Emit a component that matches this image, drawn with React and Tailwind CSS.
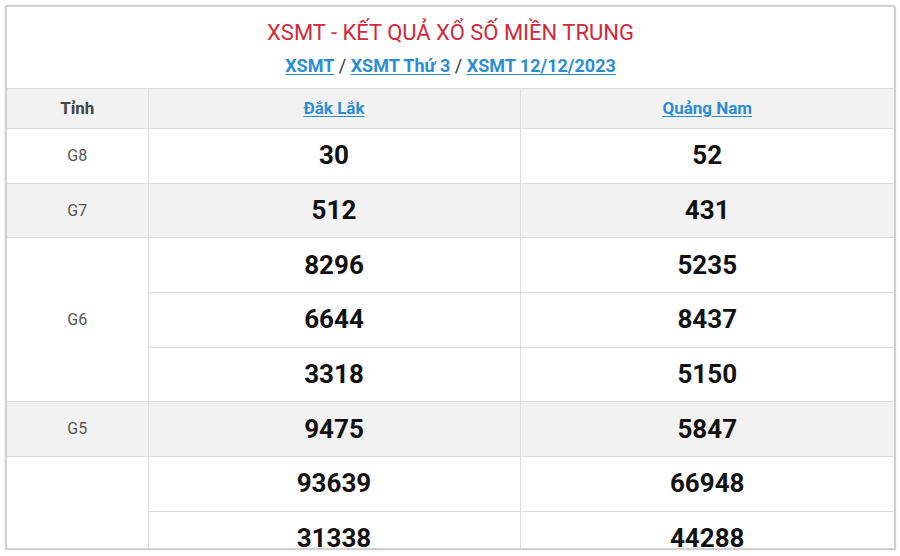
import React from 'react';

const ROWS = [
  { label: 'G8', nums: [['30', '52']], gray: false },
  { label: 'G7', nums: [['512', '431']], gray: true },
  { label: 'G6', nums: [['8296', '5235'], ['6644', '8437'], ['3318', '5150']], gray: false },
  { label: 'G5', nums: [['9475', '5847']], gray: true },
  { label: 'G4', nums: [['93639', '66948'], ['31338', '44288']], gray: false, hideLabel: true },
];

const App = () => {
  return (
    <div className="w-[900px] h-[556px] bg-white overflow-hidden" style={{ fontFamily: 'Roboto, "Liberation Sans", sans-serif' }}>
      <div className="ml-[5px] mt-[5px] w-[891px] h-[545px] border-2 border-[#d0d0d0] rounded-tr-[4px] rounded-tl-[2px] overflow-hidden shadow-[0_0_2px_rgba(0,0,0,0.15)]">
        <div className="text-center pt-[13px] h-[81px]">
          <h1 className="text-[22px] leading-[26px] text-[#d3283a]">XSMT - KẾT QUẢ XỔ SỐ MIỀN TRUNG</h1>
          <div className="mt-[9px] text-[18px] leading-[21px] font-bold text-[#333]">
            <a className="text-[#2b8ed3] underline underline-offset-2" href="#">XSMT</a>
            <span className="font-normal"> / </span>
            <a className="text-[#2b8ed3] underline underline-offset-2" href="#">XSMT Thứ 3</a>
            <span className="font-normal"> / </span>
            <a className="text-[#2b8ed3] underline underline-offset-2" href="#">XSMT 12/12/2023</a>
          </div>
        </div>
        <table className="w-full border-collapse table-fixed">
          <colgroup>
            <col className="w-[141px]" />
            <col className="w-[372px]" />
            <col />
          </colgroup>
          <thead>
            <tr className="h-[40px] bg-[#f2f2f2]">
              <th className="border-t border-[#dcdcdc] text-[17px] font-bold text-[#444]">Tỉnh</th>
              <th className="border-t border-l border-[#dcdcdc] text-[17px] font-bold">
                <a className="text-[#2b8ed3] underline underline-offset-2" href="#">Đắk Lắk</a>
              </th>
              <th className="border-t border-l border-[#dcdcdc] text-[17px] font-bold">
                <a className="text-[#2b8ed3] underline underline-offset-2" href="#">Quảng Nam</a>
              </th>
            </tr>
          </thead>
          <tbody>
            {ROWS.map((row) =>
              row.nums.map((pair, i) => (
                <tr key={row.label + i} className={row.gray ? 'h-[54.7px] bg-[#f2f2f2]' : 'h-[54.7px] bg-white'}>
                  {i === 0 && (
                    <td rowSpan={row.nums.length} className="border-t border-[#dcdcdc] text-center text-[16px] text-[#555] bg-inherit">
                      {row.hideLabel ? '' : row.label}
                    </td>
                  )}
                  <td className="border-t border-l border-[#dcdcdc] text-center text-[26px] font-bold text-[#111]">{pair[0]}</td>
                  <td className="border-t border-l border-[#dcdcdc] text-center text-[26px] font-bold text-[#111]">{pair[1]}</td>
                </tr>
              ))
            )}
          </tbody>
        </table>
      </div>
    </div>
  );
};

export default App;
